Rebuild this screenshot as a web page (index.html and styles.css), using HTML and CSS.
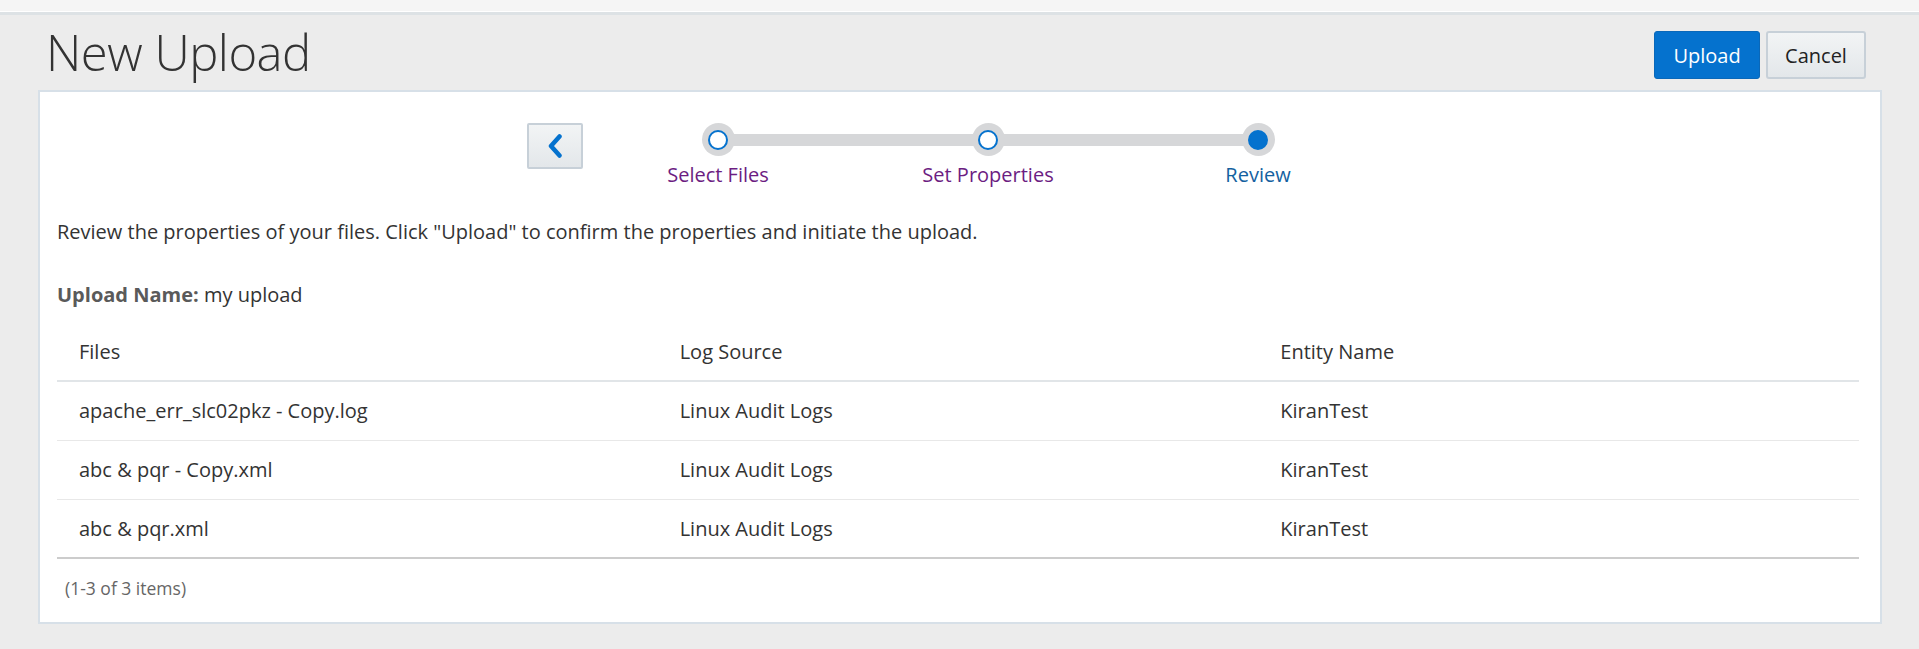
FILE: index.html
```html
<!DOCTYPE html>
<html lang="en">
<head>
<meta charset="utf-8">
<title>New Upload</title>
<link rel="stylesheet" href="styles.css">
</head>
<body>
<div class="topstrip"></div>
<div class="page">
  <header class="page-header">
    <h1 class="title">New Upload</h1>
    <div class="actions">
      <button class="btn btn-primary">Upload</button>
      <button class="btn btn-secondary">Cancel</button>
    </div>
  </header>
  <main class="card">
    <div class="stepper">
      <button class="back-btn" aria-label="Back">
        <svg width="16" height="24" viewBox="0 0 16 24"><path d="M12.5 2.5 L4 12 L12.5 21.5" fill="none" stroke="#0572ce" stroke-width="4.5" stroke-linecap="round" stroke-linejoin="round"/></svg>
      </button>
      <div class="steps">
        <div class="track"></div>
        <div class="step visited">
          <span class="dot"><span class="inner"></span></span>
          <span class="label">Select Files</span>
        </div>
        <div class="step visited">
          <span class="dot"><span class="inner"></span></span>
          <span class="label">Set Properties</span>
        </div>
        <div class="step current">
          <span class="dot"><span class="inner"></span></span>
          <span class="label">Review</span>
        </div>
      </div>
    </div>

    <p class="desc">Review the properties of your files. Click "Upload" to confirm the properties and initiate the upload.</p>
    <p class="upload-name"><strong>Upload Name:</strong> my upload</p>

    <table class="grid">
      <thead>
        <tr><th>Files</th><th>Log Source</th><th>Entity Name</th></tr>
      </thead>
      <tbody>
        <tr><td>apache_err_slc02pkz - Copy.log</td><td>Linux Audit Logs</td><td>KiranTest</td></tr>
        <tr><td>abc &amp; pqr - Copy.xml</td><td>Linux Audit Logs</td><td>KiranTest</td></tr>
        <tr><td>abc &amp; pqr.xml</td><td>Linux Audit Logs</td><td>KiranTest</td></tr>
      </tbody>
    </table>
    <div class="footer">(1-3 of 3 items)</div>
  </main>
</div>
</body>
</html>
```
FILE: styles.css
```css
* { box-sizing: border-box; }
html, body { margin: 0; padding: 0; }
body {
  background: #ececec;
  font-family: "Open Sans", "Noto Sans", sans-serif;
  color: #333;
  width: 1919px;
  height: 649px;
  overflow: hidden;
}
.topstrip {
  height: 15px;
  background: #f5f5f5;
  border-bottom: 3px solid #dde2e5;
  box-shadow: inset 0 -1px 0 #ffffff;
}
.page {
  padding: 0 37px 0 38px;
}
.page-header {
  height: 75px;
  display: flex;
  justify-content: space-between;
  align-items: flex-start;
  padding: 0 16px 0 8px;
}
.title {
  margin: 7px 0 0 0;
  font-size: 49px;
  line-height: 60px;
  font-weight: 300;
  color: #333;
  letter-spacing: -0.5px;
}
.actions {
  display: flex;
  gap: 6px;
  margin-top: 16px;
}
.btn {
  height: 48px;
  font-family: inherit;
  font-size: 20px;
  border-radius: 3px;
  padding: 0;
}
.btn-primary {
  width: 106px;
  background: #0572ce;
  border: 1px solid #0a68b9;
  color: #fff;
}
.btn-secondary {
  width: 100px;
  background: linear-gradient(#f2f4f5, #e3e7ea);
  border: 2px solid #c7d0d8;
  color: #222;
}
.card {
  background: #fff;
  border: 2px solid #d7e0e8;
  height: 534px;
  padding: 31px 21px 0 17px;
}
.stepper {
  display: flex;
  justify-content: center;
  align-items: flex-start;
  margin-left: 4px;
}
.back-btn {
  width: 56px;
  height: 46px;
  padding: 0;
  border: 2px solid #c7d0d8;
  border-radius: 2px;
  background: linear-gradient(#f2f4f5, #e3e7ea);
  display: flex;
  align-items: center;
  justify-content: center;
}
.steps {
  position: relative;
  display: flex;
}
.track {
  position: absolute;
  left: 135px;
  right: 135px;
  top: 11px;
  height: 12px;
  background: #d6d7d9;
}
.step {
  position: relative;
  width: 270px;
  display: flex;
  flex-direction: column;
  align-items: center;
}
.dot {
  width: 33px;
  height: 33px;
  border-radius: 50%;
  background: #d6d7d9;
  display: flex;
  align-items: center;
  justify-content: center;
}
.inner {
  width: 20px;
  height: 20px;
  border-radius: 50%;
  background: #fff;
  border: 2px solid #0572ce;
}
.current .inner {
  background: #0572ce;
}
.label {
  margin-top: 7px;
  font-size: 20px;
  line-height: 24px;
}
.visited .label { color: #6c1d82; }
.current .label { color: #14619f; }
.desc {
  margin: 33px 0 0 0;
  font-size: 20px;
  line-height: 24px;
}
.upload-name {
  margin: 39px 0 0 0;
  font-size: 20px;
  line-height: 24px;
}
.upload-name strong {
  color: #5a5a5a;
  font-weight: 700;
}
.grid {
  margin-top: 16px;
  width: 1802px;
  border-collapse: collapse;
  table-layout: fixed;
  font-size: 20px;
}
.grid th, .grid td {
  text-align: left;
  font-weight: 400;
  padding: 0 22px;
  color: #333;
}
.grid th { height: 58px; }
.grid td { height: 59px; }
.grid thead th {
  border-bottom: 2px solid #e1e5e8;
}
.grid tbody td {
  border-bottom: 1px solid #e8e8e8;
}
.grid tbody tr:last-child td {
  border-bottom: 2px solid #cccccc;
}
.footer {
  margin: 18px 0 0 8px;
  font-size: 17.5px;
  line-height: 22px;
  color: #666;
}
```
